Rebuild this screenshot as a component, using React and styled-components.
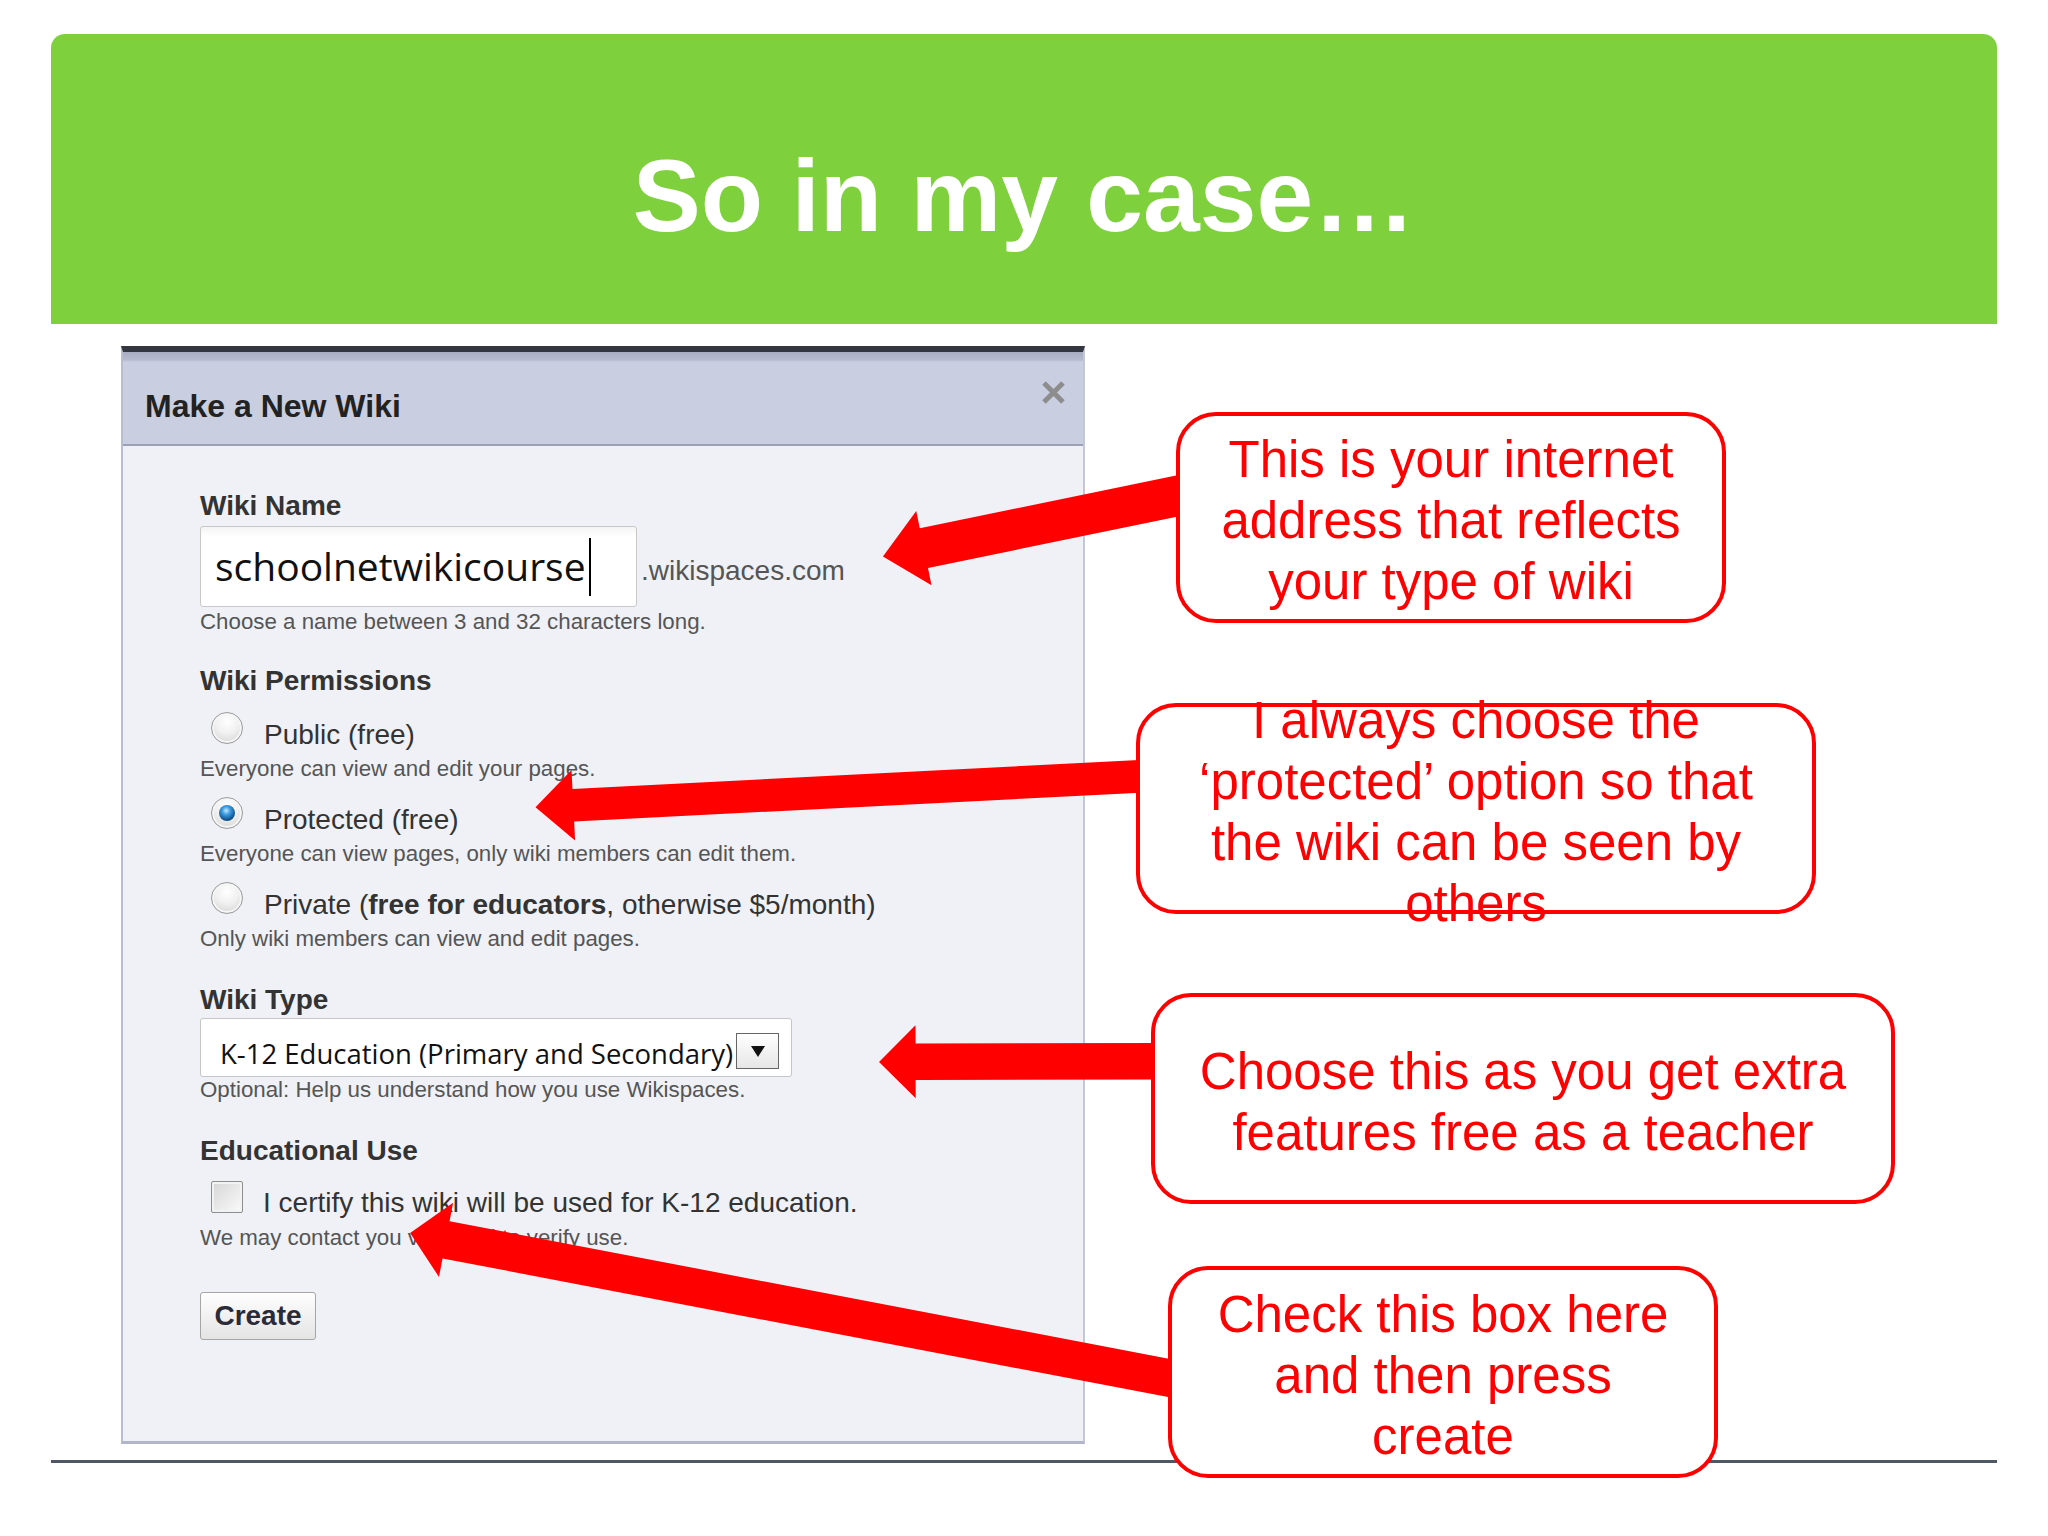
import React from 'react';
import styled, { createGlobalStyle } from 'styled-components';

const GlobalStyle = createGlobalStyle`
  html, body {
    margin: 0;
    padding: 0;
    background: #fff;
  }
  body {
    font-family: "Liberation Sans", Arial, sans-serif;
  }
`;

const Slide = styled.div`
  position: relative;
  width: 2048px;
  height: 1536px;
  background: #fff;
  overflow: hidden;
`;

const Banner = styled.header`
  margin: 34px 51px 0;
  height: 290px;
  box-sizing: border-box;
  padding-top: 111px;
  background: #7ed13c;
  border-radius: 14px 14px 0 0;
  text-align: center;
`;

const Title = styled.h1`
  margin: 0;
  font: bold 102px/102px "Liberation Sans", Arial, sans-serif;
  color: #fff;
`;

const Stage = styled.div`
  display: flex;
  height: 1136px;
  padding-left: 121px;
`;

const Dialog = styled.section`
  margin-top: 22px;
  width: 964px;
  height: 1098px;
  flex-shrink: 0;
  box-sizing: border-box;
  border-top: 6px solid #34373f;
  border-left: 2px solid #b9bdd0;
  border-right: 2px solid #c3c7d7;
  border-bottom: 3px solid #b1b5ca;
  background: #eff1f6;
  display: flex;
  flex-direction: column;
`;

const DialogHead = styled.div`
  height: 94px;
  flex-shrink: 0;
  box-sizing: border-box;
  padding: 0 17px 0 22px;
  border-bottom: 2px solid #9da1b4;
  background: linear-gradient(#a8adc3 0, #b6bbd0 8px, #c9cee0 10px, #c9cee0 100%);
  display: flex;
  justify-content: space-between;
  align-items: flex-start;
`;

const DialogTitle = styled.h2`
  margin: 36px 0 0;
  font: bold 32px/36px "Liberation Sans", Arial, sans-serif;
  color: #222;
`;

const Close = styled.svg`
  margin-top: 28px;
  width: 25px;
  height: 25px;
`;

const DialogBody = styled.div`
  flex: 1;
  padding: 44px 0 0 77px;
  display: flex;
  flex-direction: column;
  align-items: flex-start;
`;

const FieldLabel = styled.div`
  margin-top: ${p => p.$mt || 0}px;
  font: bold 28px/32px "Liberation Sans", Arial, sans-serif;
  color: #333;
`;

const Hint = styled.div`
  margin-top: ${p => p.$mt || 0}px;
  font: 22.3px/26px "Liberation Sans", Arial, sans-serif;
  color: #555;
  white-space: nowrap;
`;

const InputRow = styled.div`
  margin-top: 4px;
  display: flex;
  align-items: flex-start;
`;

const TextBox = styled.div`
  width: 437px;
  height: 81px;
  box-sizing: border-box;
  padding-left: 14px;
  border: 1px solid #c8c8c8;
  border-radius: 3px;
  background: linear-gradient(#f4f4f4, #fff 10px);
  display: flex;
  align-items: center;
  font: 39px/1.2 "Open Sans", "Liberation Sans", sans-serif;
  color: #111;
`;

const Caret = styled.span`
  display: inline-block;
  width: 2px;
  height: 58px;
  margin-left: 3px;
  background: #000;
`;

const Suffix = styled.span`
  margin: 28px 0 0 4px;
  font: 28px/34px "Liberation Sans", Arial, sans-serif;
  color: #555;
`;

const Option = styled.div`
  margin-top: 15px;
  display: flex;
  align-items: flex-start;
`;

const Radio = styled.span`
  position: relative;
  width: 32px;
  height: 32px;
  margin-left: 11px;
  box-sizing: border-box;
  border-radius: 50%;
  border: 1px solid #9b9b9b;
  background: radial-gradient(circle at 50% 30%, #fff 0, #f0f0f0 45%, #cdcdcd 100%);
  box-shadow: inset 0 0 0 2px #f6f6f6;
  flex-shrink: 0;

  &::after {
    content: '';
    display: ${p => (p.$checked ? 'block' : 'none')};
    position: absolute;
    inset: 7px;
    border-radius: 50%;
    background: radial-gradient(circle at 45% 35%, #c4e8ff 0, #3d9ce0 30%, #0f4f8c 70%, #062f57 100%);
  }
`;

const OptionText = styled.span`
  margin: 6px 0 0 21px;
  font: 28px/34px "Liberation Sans", Arial, sans-serif;
  color: #333;
  white-space: nowrap;

  b {
    font-weight: bold;
  }
`;

const SelectBox = styled.div`
  margin-top: 2px;
  width: 592px;
  height: 59px;
  box-sizing: border-box;
  border: 1px solid #c6c6c6;
  border-radius: 3px;
  background: #fff;
  display: flex;
  align-items: flex-start;
`;

const SelectText = styled.span`
  flex: 1;
  min-width: 0;
  white-space: nowrap;
  padding: 20px 0 0 19px;
  font: 500 27.5px/30px "Open Sans", "Liberation Sans", sans-serif;
  color: #111;
`;

const DropButton = styled.span`
  width: 43px;
  height: 36px;
  margin: 14px 12px 0 0;
  box-sizing: border-box;
  border: 1px solid #666;
  background: linear-gradient(#fff, #e6e6e6);
  display: flex;
  align-items: center;
  justify-content: center;
  flex-shrink: 0;

  &::before {
    content: '';
    width: 0;
    height: 0;
    border-left: 7px solid transparent;
    border-right: 7px solid transparent;
    border-top: 11px solid #111;
  }
`;

const CheckRow = styled.div`
  margin-top: 14px;
  display: flex;
  align-items: flex-start;
`;

const CheckBox = styled.span`
  width: 32px;
  height: 32px;
  margin-left: 11px;
  box-sizing: border-box;
  border: 1px solid #8e8e8e;
  border-radius: 2px;
  background: linear-gradient(135deg, #d6d6d6, #fafafa);
  box-shadow: inset 0 0 0 2px #f2f2f2;
  flex-shrink: 0;
`;

const CheckText = styled.span`
  margin: 5px 0 0 20px;
  font: 28px/34px "Liberation Sans", Arial, sans-serif;
  color: #333;
  white-space: nowrap;
`;

const CreateButton = styled.button`
  margin-top: 41px;
  width: 116px;
  height: 48px;
  padding: 0;
  box-sizing: border-box;
  border: 1px solid #a5a5a5;
  border-radius: 3px;
  background: linear-gradient(#fefefe, #e4e4e4);
  font: bold 28px "Liberation Sans", Arial, sans-serif;
  color: #2a2a38;
`;

const Notes = styled.div`
  display: flex;
  flex-direction: column;
  align-items: flex-start;
`;

const Callout = styled.div`
  position: relative;
  z-index: 2;
  flex-shrink: 0;
  width: ${p => p.$w}px;
  height: ${p => p.$h}px;
  margin: ${p => p.$mt}px 0 0 ${p => p.$ml}px;
  padding-top: 6px;
  box-sizing: border-box;
  border: 4px solid #f00;
  border-radius: 40px;
  background: #fff;
  display: flex;
  align-items: center;
  justify-content: center;
  text-align: center;
  font: 51px/61px "Liberation Sans", Arial, sans-serif;
  color: #f00;
  white-space: nowrap;
`;

const Rule = styled.div`
  margin: 0 51px;
  height: 3px;
  background: #4f5664;
`;

const Overlay = styled.svg`
  position: absolute;
  top: 0;
  left: 0;
  width: 2048px;
  height: 1536px;
  z-index: 1;
  pointer-events: none;
`;

// arrow outline from tail to tip, in the 1568x1176 drawing space
function arrowPoints([tx, ty], [px, py], w, hw, hl) {
  const dx = px - tx;
  const dy = py - ty;
  const len = Math.hypot(dx, dy);
  const ux = dx / len;
  const uy = dy / len;
  const nx = -uy;
  const ny = ux;
  const bx = px - ux * hl;
  const by = py - uy * hl;
  const pts = [
    [tx + nx * w / 2, ty + ny * w / 2],
    [bx + nx * w / 2, by + ny * w / 2],
    [bx + nx * hw / 2, by + ny * hw / 2],
    [px, py],
    [bx - nx * hw / 2, by - ny * hw / 2],
    [bx - nx * w / 2, by - ny * w / 2],
    [tx - nx * w / 2, ty - ny * w / 2],
  ];
  return pts.map(p => p.map(v => v.toFixed(1)).join(',')).join(' ');
}

const arrows = [
  { tail: [910, 378], tip: [676, 426], w: 31, hw: 58, hl: 32 },
  { tail: [880, 594], tip: [410, 618], w: 25, hw: 54, hl: 29 },
  { tail: [890, 812.5], tip: [673, 813], w: 28, hw: 56, hl: 28 },
  { tail: [905, 1057], tip: [314, 944], w: 29, hw: 58, hl: 28 },
];

const notes = [
  { ml: 91, mt: 88, w: 550, h: 211, lines: ['This is your internet', 'address that reflects', 'your type of wiki'] },
  { ml: 51, mt: 80, w: 680, h: 211, lines: ['I always choose the', '\u2018protected\u2019 option so that', 'the wiki can be seen by', 'others'] },
  { ml: 66, mt: 79, w: 744, h: 211, lines: ['Choose this as you get extra', 'features free as a teacher'] },
  { ml: 83, mt: 62, w: 550, h: 212, lines: ['Check this box here', 'and then press', 'create'] },
];

export default function App() {
  return (
    <Slide>
      <GlobalStyle />
      <Banner>
        <Title>So in my case…</Title>
      </Banner>
      <Stage>
        <Dialog>
          <DialogHead>
            <DialogTitle>Make a New Wiki</DialogTitle>
            <Close viewBox="0 0 25 25">
              <path d="M3 3 L22 22 M22 3 L3 22" stroke="#8d8d8d" strokeWidth="5" fill="none" />
            </Close>
          </DialogHead>
          <DialogBody>
            <FieldLabel>Wiki Name</FieldLabel>
            <InputRow>
              <TextBox>
                schoolnetwikicourse<Caret />
              </TextBox>
              <Suffix>.wikispaces.com</Suffix>
            </InputRow>
            <Hint $mt={2}>Choose a name between 3 and 32 characters long.</Hint>

            <FieldLabel $mt={30}>Wiki Permissions</FieldLabel>
            <Option>
              <Radio />
              <OptionText>Public (free)</OptionText>
            </Option>
            <Hint $mt={4}>Everyone can view and edit your pages.</Hint>
            <Option>
              <Radio $checked />
              <OptionText>Protected (free)</OptionText>
            </Option>
            <Hint $mt={4}>Everyone can view pages, only wiki members can edit them.</Hint>
            <Option>
              <Radio />
              <OptionText>
                Private (<b>free for educators</b>, otherwise $5/month)
              </OptionText>
            </Option>
            <Hint $mt={4}>Only wiki members can view and edit pages.</Hint>

            <FieldLabel $mt={32}>Wiki Type</FieldLabel>
            <SelectBox>
              <SelectText>K-12 Education (Primary and Secondary)</SelectText>
              <DropButton />
            </SelectBox>
            <Hint>Optional: Help us understand how you use Wikispaces.</Hint>

            <FieldLabel $mt={32}>Educational Use</FieldLabel>
            <CheckRow>
              <CheckBox />
              <CheckText>I certify this wiki will be used for K-12 education.</CheckText>
            </CheckRow>
            <Hint $mt={5}>We may contact you via email to verify use.</Hint>

            <CreateButton type="button">Create</CreateButton>
          </DialogBody>
        </Dialog>
        <Notes>
          {notes.map((n, i) => (
            <Callout key={i} $ml={n.ml} $mt={n.mt} $w={n.w} $h={n.h}>
              <div>
                {n.lines.map((line, j) => (
                  <div key={j}>{line}</div>
                ))}
              </div>
            </Callout>
          ))}
        </Notes>
      </Stage>
      <Rule />
      <Overlay viewBox="0 0 1568 1176" preserveAspectRatio="none">
        {arrows.map((a, i) => (
          <polygon key={i} points={arrowPoints(a.tail, a.tip, a.w, a.hw, a.hl)} fill="#f00" />
        ))}
      </Overlay>
    </Slide>
  );
}
